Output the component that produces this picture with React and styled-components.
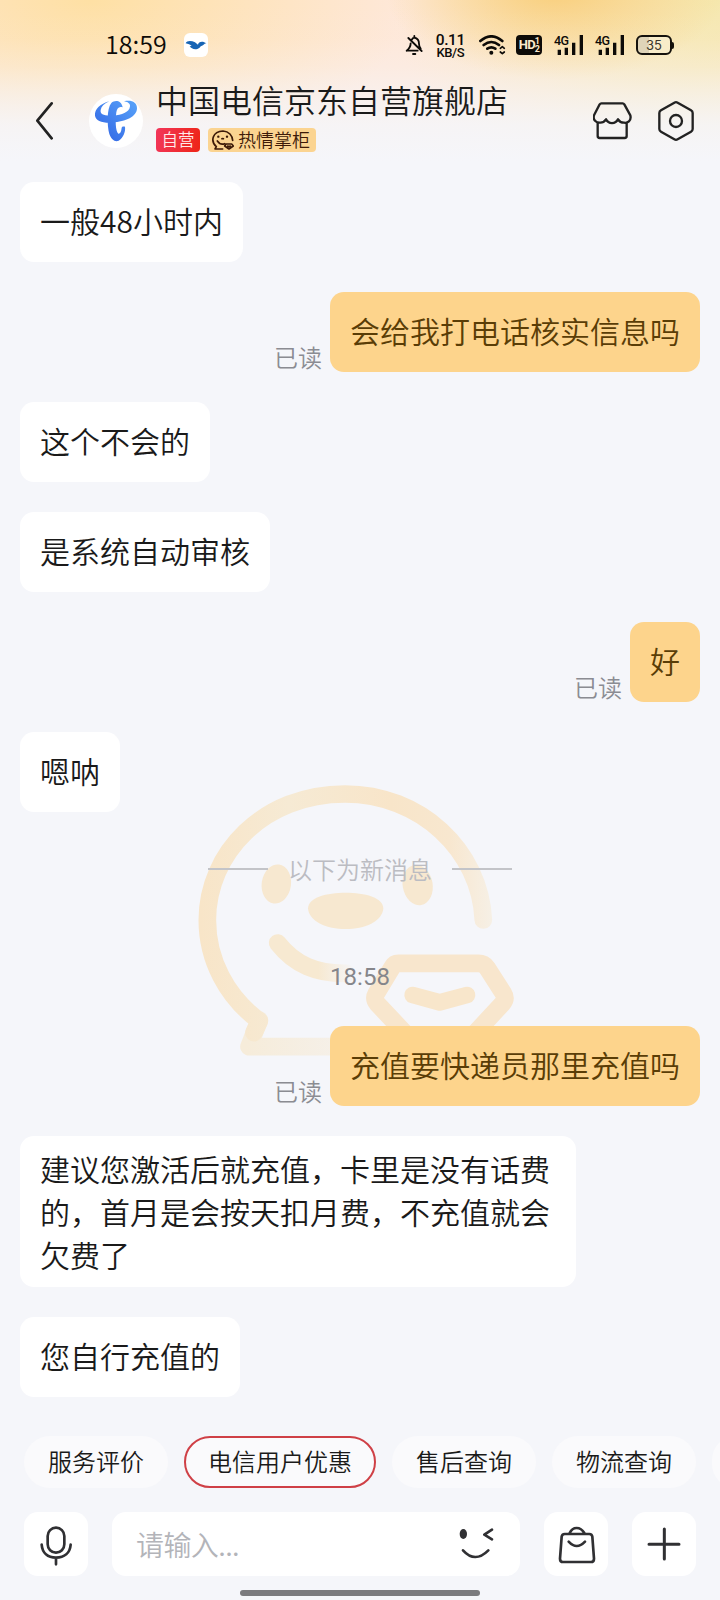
import React from 'react';
import styled, { createGlobalStyle } from 'styled-components';

const GlobalStyle = createGlobalStyle`
  *, *::before, *::after { box-sizing: border-box; }
  html, body { margin: 0; padding: 0; background: #f5f6fa; }
  body { font-family: "Noto Sans CJK SC", sans-serif; font-weight: 350; color: #1a1a1a; }
`;

const Screen = styled.div`
  position: relative;
  width: 720px;
  height: 1600px;
  overflow: hidden;
  display: flex;
  flex-direction: column;
  background: #f5f6fa;
`;

const Header = styled.header`
  height: 175px;
  flex: none;
  background:
    linear-gradient(180deg, rgba(245, 246, 250, 0) 0%, rgba(245, 246, 250, 0.04) 22%, rgba(245, 246, 250, 0.22) 38%, rgba(245, 246, 250, 0.55) 54%, rgba(245, 246, 250, 0.85) 71%, #f5f6fa 92%),
    radial-gradient(ellipse 170px 90px at 555px -10px, #f9cf7c 0%, rgba(249, 207, 124, 0) 100%),
    radial-gradient(ellipse 320px 160px at 90px 0px, #fee0a4 0%, rgba(254, 224, 164, 0) 100%),
    radial-gradient(ellipse 330px 210px at 720px 0px, #f5e8ae 0%, rgba(245, 232, 174, 0) 100%),
    #fee8da;
`;

const StatusBar = styled.div`
  height: 90px;
  padding: 0 46px 0 105px;
  display: flex;
  align-items: center;
  color: #0d0b08;
`;

const Clock = styled.span`
  width: 79px;
  font-size: 25px;
  line-height: 30px;
  font-weight: 350;
  margin-top: -4px;
`;

const AppBadge = styled.span`
  width: 24px;
  height: 24px;
  border-radius: 6px;
  background: #fff;
  display: flex;
`;

const StatusIcons = styled.div`
  margin-left: auto;
  display: flex;
  align-items: center;
`;

const Speed = styled.div`
  width: 30px;
  margin: 0 14px 0 12px;
  display: flex;
  flex-direction: column;
  align-items: center;
  font-family: Roboto, sans-serif;
  font-weight: 500;
  font-size: 15.5px;
  letter-spacing: -0.4px;
  line-height: 14px;
`;

const SpeedUnit = styled.span`
  font-size: 13px;
  line-height: 11px;
  letter-spacing: -0.4px;
`;

const HdBadge = styled.div`
  width: 26px;
  height: 20px;
  margin: 0 12px 0 10px;
  border-radius: 4px;
  background: #0d0b08;
  color: #fbe9cc;
  display: flex;
  align-items: center;
  justify-content: center;
  font: 700 13px/20px Roboto, sans-serif;
  letter-spacing: -0.8px;
`;

const SimStack = styled.span`
  display: flex;
  flex-direction: column;
  font-size: 9px;
  line-height: 8px;
`;

const Signal = styled.div`
  width: 29px;
  height: 20px;
  margin-right: 12px;
  display: grid;

  & > * { grid-area: 1 / 1; }
`;

const SignalLabel = styled.span`
  font: 500 12.5px/11px Roboto, sans-serif;
  letter-spacing: -0.7px;
`;

const Battery = styled.div`
  width: 36px;
  height: 20px;
  border: 2px solid #15120c;
  border-radius: 6px;
  background: linear-gradient(90deg, #dfd4b8 0 35%, #f8ecc9 35%);
  display: flex;
  align-items: center;
  justify-content: center;
  font: 400 13px/16px Inter, sans-serif;
  color: #3b372d;
`;

const BatteryTip = styled.span`
  width: 2px;
  height: 7px;
  border-radius: 0 2px 2px 0;
  background: #15120c;
`;

const TitleBar = styled.div`
  height: 85px;
  padding: 0 26px 0 35px;
  display: flex;
  align-items: flex-start;
`;

const Avatar = styled.div`
  width: 54px;
  height: 54px;
  margin: 4px 13px 0 35px;
  border-radius: 50%;
  background: #fff;
`;

const TitleColumn = styled.div`
  display: flex;
  flex-direction: column;
  margin-top: -12px;
`;

const Title = styled.h1`
  margin: 0;
  font-size: 32px;
  line-height: 42px;
  font-weight: 350;
  white-space: nowrap;
`;

const Tags = styled.div`
  display: flex;
  gap: 8px;
  margin-top: 8px;
`;

const SelfTag = styled.span`
  width: 44px;
  height: 24px;
  border-radius: 4px;
  background: linear-gradient(100deg, #f2365a, #ee2516);
  color: #ffe9e9;
  font-size: 16.5px;
  line-height: 22px;
  text-align: center;
`;

const KeeperTag = styled.span`
  width: 108px;
  height: 24px;
  padding-left: 4px;
  border-radius: 4px;
  background: #fbd491;
  color: #3d1a08;
  font-size: 18px;
  line-height: 22px;
  display: flex;
  align-items: center;
  gap: 4px;
  white-space: nowrap;
`;

const KeeperName = styled.span`
  margin-top: -3px;
`;

const BackButton = styled.div`
  margin-top: 11px;
`;

const TitleActions = styled.div`
  margin: 10px 0 0 auto;
  display: flex;
  gap: 26px;
`;

const Messages = styled.main`
  flex: none;
  height: 1245px;
  padding: 7px 20px 0;
  position: relative;
  z-index: 0;
  display: flex;
  flex-direction: column;
  align-items: flex-start;
  gap: 30px;

  & > * { flex: none; }
`;

const Watermark = styled.svg`
  position: absolute;
  z-index: -1;
  left: 180px;
  top: 585px;
  width: 360px;
  height: 320px;
`;

const Bubble = styled.div`
  min-height: 80px;
  max-width: 556px;
  padding: ${(p) => (p.$multi ? '11px 20px' : '17px 20px 20px')};
  border-radius: 14px;
  background: ${(p) => (p.$mine ? '#fdd48c' : '#fff')};
  color: ${(p) => (p.$mine ? '#5a3d06' : '#1a1a1a')};
  font-size: 30px;
  line-height: 43px;
`;

const MineRow = styled.div`
  align-self: flex-end;
  display: flex;
  align-items: flex-end;
  gap: 8px;
`;

const ReadMark = styled.span`
  margin-bottom: 1px;
  color: #8b8c92;
  font-size: 24px;
  line-height: 28px;
`;

const Divider = styled.div`
  align-self: center;
  height: 54px;
  width: 304px;
  display: flex;
  align-items: center;
  justify-content: space-between;
  color: #bbbcc2;
  font-size: 24px;
  line-height: 28px;

  &::before, &::after {
    content: "";
    width: 60px;
    height: 2px;
    background: #c3c4c8;
  }
`;

const TimeStamp = styled.div`
  align-self: center;
  height: 70px;
  padding-top: 37px;
  font: 400 24px/28px Roboto, sans-serif;
  color: #85868b;
`;

const ChipRow = styled.nav`
  flex: none;
  margin-top: 16px;
  padding-left: 24px;
  display: flex;
  gap: 16px;
`;

const Chip = styled.button`
  flex: none;
  height: 52px;
  padding: 0 ${(p) => (p.$active ? 22 : 24)}px 2px;
  border: ${(p) => (p.$active ? '2px solid #cf4046' : '0')};
  border-radius: 26px;
  background: #fafafc;
  color: #1a1a1a;
  font: inherit;
  font-size: 24px;
  line-height: 46px;
`;

const Composer = styled.div`
  flex: none;
  margin-top: 24px;
  padding: 0 24px;
  display: flex;
  gap: 24px;
`;

const Tile = styled.button`
  width: 64px;
  height: 64px;
  padding: 0;
  border: 0;
  border-radius: 14px;
  background: #fff;
  display: flex;
`;

const InputBox = styled.div`
  flex: 1;
  height: 64px;
  padding: 0 24px;
  border-radius: 14px;
  background: #fff;
  display: flex;
  align-items: center;
  justify-content: space-between;
`;

const Placeholder = styled.span`
  color: #b3b4b9;
  font-size: 28px;
  line-height: 40px;
  letter-spacing: -0.6px;
`;

const HomeBar = styled.div`
  flex: none;
  align-self: center;
  width: 240px;
  height: 6px;
  margin-top: 14px;
  border-radius: 3px;
  background: #7b7b7e;
`;

const GlyphSvg = styled.svg`
  flex: none;
  display: block;
  fill: none;
  stroke-linecap: round;
  stroke-linejoin: round;
`;

/* Line icons are drawn on a grid of three units per pixel. */
const Glyph = ({ x = 0, y = 0, w, h, stroke = '#222', sw = 7, children }) => (
  <GlyphSvg width={w / 3} height={h / 3} viewBox={`${x} ${y} ${w} ${h}`} stroke={stroke} strokeWidth={sw}>
    {children}
  </GlyphSvg>
);

const BellOff = () => (
  <Glyph x={136} y={104} w={54} h={60} stroke="#0d0b08" sw={5.5}>
    <path d="M146 113 186 152M141 151Q153 142 153 129M156 118Q160 112 164 112Q178 115 178 130Q178 139 183 145M164 107V111M141 151H174" />
    <path d="M160 161H167" />
  </Glyph>
);

const Wifi = () => (
  <Glyph x={358} y={104} w={80} h={60} stroke="#0d0b08" sw={8}>
    <path d="M362 122Q395 94 428 122M372 134Q395 116 418 134M383 145Q395 137 407 145" />
    <circle cx="395" cy="157" r="6" fill="#0d0b08" stroke="none" />
    <path d="M422 144 428 139 434 144M422 155 428 160 434 155" strokeWidth="5" />
  </Glyph>
);

const SignalBars = () => (
  <Glyph x={582} y={104} w={87} h={60} stroke="#0d0b08" sw={10}>
    <path strokeLinecap="butt" d="M598 148V164M619 142V164M641 127V164M664 104V164" />
  </Glyph>
);

const Bird = () => (
  <Glyph x={552} y={99} w={72} h={72}>
    <path fill="#1764b4" stroke="none" d="M557 130C560 122 573 121 585 127L594 134C595 125 608 121 619 130C613 130 612 136 604 138C599 140 602 143 592 147C580 149 574 145 569 139L575 138C571 133 564 132 557 130Z" />
  </Glyph>
);

const Back = () => (
  <BackButton>
    <Glyph x={105} y={303} w={57} h={118} sw={8}><path d="M155 310 112 362 155 415" /></Glyph>
  </BackButton>
);

const TelecomLogo = () => (
  <Glyph x={267} y={282} w={162} h={162}>
    <defs>
      <linearGradient id="telecom" gradientUnits="userSpaceOnUse" x1="310" y1="410" x2="400" y2="310">
        <stop offset="0" stopColor="#356be6" /><stop offset="1" stopColor="#559ff8" />
      </linearGradient>
    </defs>
    <g fill="url(#telecom)" stroke="none">
      <path d="M328 304C300 312 283 328 285 347C287 362 307 370 337 368C377 365 411 350 411 325C411 307 395 299 372 304C390 307 393 316 388 326C380 340 357 347 330 347C309 347 300 341 302 330C304 319 313 310 328 304Z" />
      <path d="M368 322C364 301 345 299 334 309C320 326 321 376 328 402C334 419 345 427 356 422C370 413 377 395 375 380C369 379 366 380 365 383C364 395 360 402 355 401C346 393 346 360 349 337C351 325 356 318 368 322Z" />
    </g>
  </Glyph>
);

const KeeperFace = () => (
  <Glyph x={636} y={388} w={66} h={60} stroke="#3d1a08" sw={5}>
    <path d="M668 445H645L649 438C630 421 638 392 669 391C687 392 697 405 698 419M652 421Q661 434 674 429" />
    <path d="M678 430H695L700 436 687 445 674 436ZM683 436 687 438 691 436" />
    <circle cx="655" cy="408" r="3.5" fill="#3d1a08" stroke="none" />
    <circle cx="681" cy="408" r="3.5" fill="#3d1a08" stroke="none" />
    <ellipse cx="668" cy="414" rx="5" ry="2.5" fill="#3d1a08" stroke="none" />
  </Glyph>
);

const Store = () => (
  <Glyph x={699} y={300} w={117} h={120}>
    <path d="M724 310H788Q791 310 793 313L811 346C815 363 802 370 792 368C783 368 777 363 774 358C767 373 745 373 738 358C734 364 729 368 721 368C708 369 698 359 702 346L719 313Q721 310 724 310ZM713 369V408Q713 414 719 414H794Q800 414 800 408V369" />
  </Glyph>
);

const Settings = () => (
  <Glyph x={894} y={300} w={108} h={126}>
    <path d="M943 308Q948 305 953 308L993 331Q998 334 998 339V387Q998 392 993 395L953 418Q948 421 943 418L903 395Q898 392 898 387V339Q898 334 903 331Z" />
    <circle cx="948" cy="363" r="18" />
  </Glyph>
);

const Mic = () => (
  <Glyph x={72} y={276} w={192} h={192} stroke="#303033" sw={8}>
    <rect x="143" y="323" width="50" height="75" rx="25" />
    <path d="M125 374C127 399 143 413 168 413S210 399 212 374M168 414V433" />
  </Glyph>
);

const Wink = () => (
  <Glyph x={298} y={330} w={112} h={100} stroke="#303033" sw={8}>
    <ellipse cx="311" cy="351" rx="11" ry="15" fill="#303033" stroke="none" />
    <path d="M397 338 374 353 397 367M310 400Q346 440 386 400" />
  </Glyph>
);

const Bag = () => (
  <Glyph x={552} y={276} w={192} h={192} stroke="#303033" sw={8}>
    <path d="M614 342H688Q696 342 697 350L702 416Q702 426 693 426H609Q600 426 600 416L605 350Q606 342 614 342ZM629 339Q636 324 650 324T673 339M626 365Q650 391 675 365" />
  </Glyph>
);

const Plus = () => (
  <Glyph x={816} y={276} w={192} h={192} stroke="#303033" sw={9}>
    <path d="M867 373H957M913 327V417" />
  </Glyph>
);

const ChatMascot = () => (
  <Watermark viewBox="0 0 1080 960" fill="none" strokeWidth="53" strokeLinecap="round" strokeLinejoin="round">
    <defs>
      <linearGradient id="arc" gradientUnits="userSpaceOnUse" x1="60" y1="0" x2="940" y2="0">
        <stop offset="0" stopColor="#f8e5c8" /><stop offset="0.3" stopColor="#f6ead4" />
        <stop offset="0.65" stopColor="#f8e5c9" /><stop offset="0.85" stopColor="#f8e7cf" /><stop offset="1" stopColor="#f6f0e6" />
      </linearGradient>
      <linearGradient id="mouth" gradientUnits="userSpaceOnUse" x1="290" y1="0" x2="540" y2="0">
        <stop offset="0" stopColor="#f7e9d1" /><stop offset="0.5" stopColor="#f7e9d1" /><stop offset="0.95" stopColor="#f5f6fa" />
      </linearGradient>
      <linearGradient id="foot" gradientUnits="userSpaceOnUse" x1="200" y1="0" x2="600" y2="0">
        <stop offset="0" stopColor="#f6ecda" /><stop offset="1" stopColor="#f5f2ef" />
      </linearGradient>
    </defs>
    <path stroke="url(#foot)" d="M238 780 207 860H600" />
    <path stroke="url(#arc)" d="M910 480C900 270 720 102 495 102C250 102 82 280 82 480C82 600 140 710 238 783L222 818" />
    <path stroke="url(#mouth)" d="M293 549C345 615 410 642 500 640" />
    <g fill="#f7e8d0">
      <ellipse cx="289" cy="372" rx="44" ry="59" transform="rotate(8 289 372)" />
      <ellipse cx="713" cy="375" rx="45" ry="61" transform="rotate(-10 713 375)" />
      <path d="M384 446C384 412 440 398 497 398S610 412 610 446C606 484 555 507 497 507S388 484 384 446Z" />
    </g>
    <path stroke="#f8e6cd" d="M655 610H895Q912 610 921 623L970 700Q980 716 967 731L880 825 780 910 680 825 592 731Q580 716 589 700L637 621Q643 610 655 610Z" />
    <path stroke="#f8e6cb" strokeWidth="50" d="M698 705 779 727 861 705" />
  </Watermark>
);

const Sent = ({ children }) => (
  <MineRow><ReadMark>已读</ReadMark><Bubble $mine>{children}</Bubble></MineRow>
);

const CellSignal = () => (
  <Signal><SignalBars /><SignalLabel>4G</SignalLabel></Signal>
);

export default function App() {
  return (
    <Screen>
      <GlobalStyle />
      <Header>
        <StatusBar>
          <Clock>18:59</Clock>
          <AppBadge><Bird /></AppBadge>
          <StatusIcons>
            <BellOff />
            <Speed><span>0.11</span><SpeedUnit>KB/S</SpeedUnit></Speed>
            <Wifi />
            <HdBadge>HD<SimStack><span>1</span><span>2</span></SimStack></HdBadge>
            <CellSignal />
            <CellSignal />
            <Battery>35</Battery><BatteryTip />
          </StatusIcons>
        </StatusBar>
        <TitleBar>
          <Back />
          <Avatar><TelecomLogo /></Avatar>
          <TitleColumn>
            <Title>中国电信京东自营旗舰店</Title>
            <Tags>
              <SelfTag>自营</SelfTag>
              <KeeperTag><KeeperFace /><KeeperName>热情掌柜</KeeperName></KeeperTag>
            </Tags>
          </TitleColumn>
          <TitleActions><Store /><Settings /></TitleActions>
        </TitleBar>
      </Header>

      <Messages>
        <ChatMascot />
        <Bubble>一般48小时内</Bubble>
        <Sent>会给我打电话核实信息吗</Sent>
        <Bubble>这个不会的</Bubble>
        <Bubble>是系统自动审核</Bubble>
        <Sent>好</Sent>
        <Bubble>嗯呐</Bubble>
        <Divider>以下为新消息</Divider>
        <TimeStamp>18:58</TimeStamp>
        <Sent>充值要快递员那里充值吗</Sent>
        <Bubble $multi>建议您激活后就充值，卡里是没有话费的，首月是会按天扣月费，不充值就会欠费了</Bubble>
        <Bubble>您自行充值的</Bubble>
      </Messages>

      <ChipRow>
        <Chip>服务评价</Chip>
        <Chip $active>电信用户优惠</Chip>
        <Chip>售后查询</Chip>
        <Chip>物流查询</Chip>
        <Chip aria-hidden="true" />
      </ChipRow>

      <Composer>
        <Tile><Mic /></Tile>
        <InputBox><Placeholder>请输入...</Placeholder><Wink /></InputBox>
        <Tile><Bag /></Tile>
        <Tile><Plus /></Tile>
      </Composer>
      <HomeBar />
    </Screen>
  );
}
